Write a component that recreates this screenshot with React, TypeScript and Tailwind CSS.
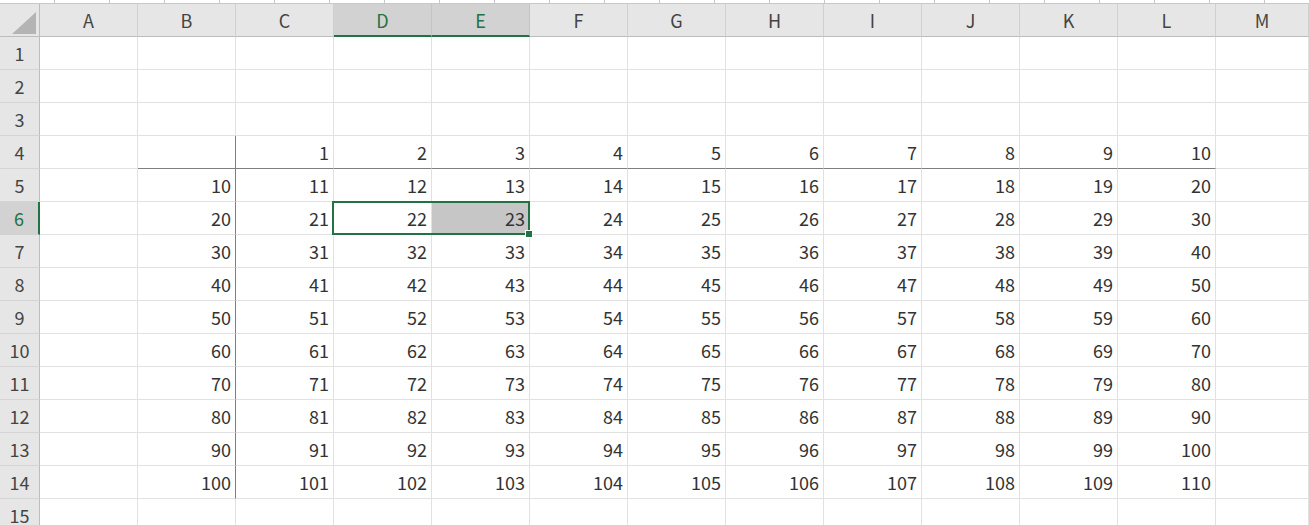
import React from 'react'

const COLS = ['A', 'B', 'C', 'D', 'E', 'F', 'G', 'H', 'I', 'J', 'K', 'L', 'M']
const ROWS = Array.from({ length: 15 }, (_, i) => i + 1)

// value shown in a cell, or null when the cell is empty
function cellValue(row: number, col: number): number | null {
  if (row === 4 && col >= 2 && col <= 11) return col - 1
  if (row >= 5 && row <= 14) {
    const base = (row - 4) * 10
    if (col === 1) return base
    if (col >= 2 && col <= 11) return base + col - 1
  }
  return null
}

function ColumnHeader({ label, index }: { label: string; index: number }) {
  const selected = index === 3 || index === 4
  return (
    <div
      className={
        selected
          ? 'flex items-center justify-center border-t border-r border-t-[#c8c8c8] border-r-[#c4c4c4] border-b-2 border-b-[#217346] bg-[#d2d2d2] text-[#217346]'
          : 'flex items-center justify-center border-t border-r border-b border-t-[#c8c8c8] border-r-[#d0d0d0] border-b-[#bdbdbd] bg-[#e6e6e6] text-[#444]'
      }
    >
      {label}
    </div>
  )
}

function RowHeader({ row }: { row: number }) {
  const selected = row === 6
  return (
    <div
      className={
        selected
          ? 'flex items-center justify-center border-b border-b-[#d0d0d0] border-r-2 border-r-[#217346] bg-[#d2d2d2] text-[#217346]'
          : 'flex items-center justify-center border-b border-r border-b-[#d4d4d4] border-r-[#bdbdbd] bg-[#e6e6e6] text-[#444]'
      }
    >
      {row}
    </div>
  )
}

function Cell({ row, col }: { row: number; col: number }) {
  const value = cellValue(row, col)
  const bottomDark = row === 4 && col >= 1 && col <= 11
  const rightDark = col === 1 && row >= 4 && row <= 14
  const filled = row === 6 && col === 4
  return (
    <div
      className={[
        'flex items-center justify-end border-r border-b pr-[4px] text-[#333]',
        bottomDark ? 'border-b-[#7f7f7f]' : 'border-b-[#e1e1e1]',
        rightDark ? 'border-r-[#7f7f7f]' : 'border-r-[#e1e1e1]',
        filled ? 'bg-[#c6c6c6]' : 'bg-white',
      ].join(' ')}
    >
      {value}
    </div>
  )
}

export default function App() {
  return (
    <div
      className="relative h-[525px] w-full overflow-hidden bg-white text-[18px] leading-none"
      style={{ fontFamily: '"Noto Sans CJK JP", "Noto Sans", sans-serif' }}
    >
      {/* ruler ticks left over from the formula bar */}
      <div className="flex h-[3px]">
        {Array.from({ length: 24 }, (_, i) => (
          <div key={i} className="w-[55px] shrink-0 border-r border-r-[#c8c8c8]" />
        ))}
      </div>

      <div className="grid h-[34px] grid-cols-[40px_repeat(12,98px)_1fr]">
        <div className="flex items-end justify-end border-t border-r border-b border-t-[#c8c8c8] border-r-[#bdbdbd] border-b-[#bdbdbd] bg-[#e6e6e6] pr-[3px] pb-[2px]">
          <svg width="24" height="22" viewBox="0 0 24 22">
            <polygon points="0,22 24,22 24,0" fill="#b4b4b4" />
          </svg>
        </div>
        {COLS.map((c, i) => (
          <ColumnHeader key={c} label={c} index={i} />
        ))}
      </div>

      <div className="grid grid-cols-[40px_repeat(12,98px)_1fr] auto-rows-[33px]">
        {ROWS.map((r) => (
          <React.Fragment key={r}>
            <RowHeader row={r} />
            {COLS.map((c, ci) => (
              <Cell key={c} row={r} col={ci} />
            ))}
          </React.Fragment>
        ))}
      </div>

      {/* selection D6:E6 */}
      <div className="absolute left-[332px] top-[201px] h-[34px] w-[198px] border-2 border-[#217346]" />
      <div className="absolute left-[525px] top-[230px] h-[8px] w-[8px] border border-white bg-[#217346]" />
    </div>
  )
}
